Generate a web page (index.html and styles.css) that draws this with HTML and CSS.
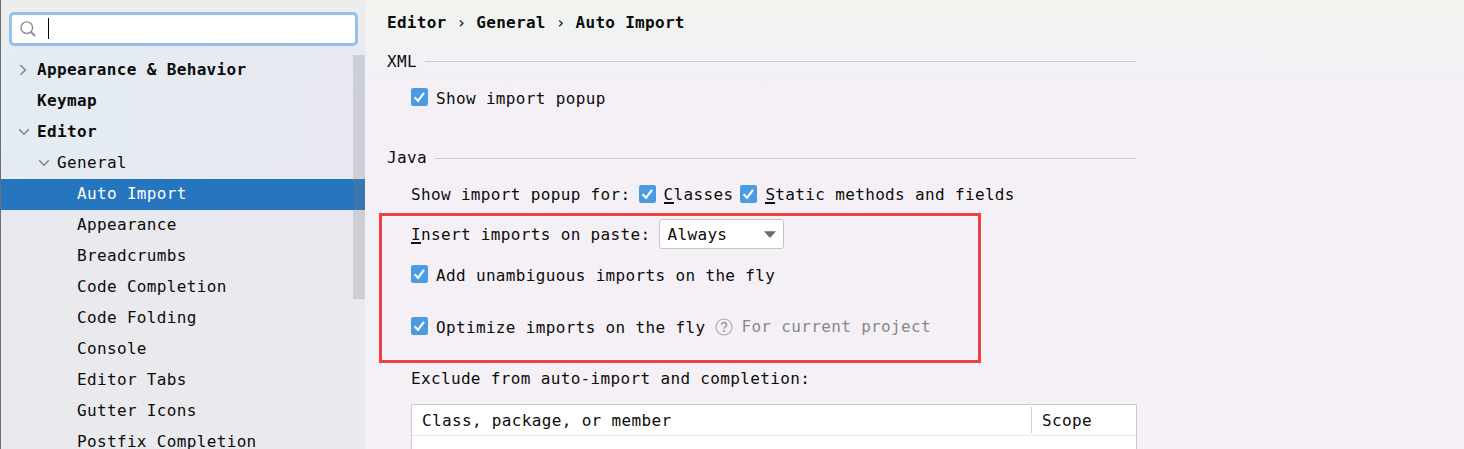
FILE: index.html
```
<!DOCTYPE html>
<html lang="en">
<head>
<meta charset="utf-8">
<title>Settings</title>
<link rel="stylesheet" href="styles.css">
</head>
<body>
<svg class="defs" width="0" height="0">
  <symbol id="check" viewBox="0 0 17 18"><rect width="17" height="18" rx="2.2" fill="#4b9be3"/><path d="M3.6 9.2 7 12.9 13 4.8" fill="none" stroke="#fff" stroke-width="2.2"/></symbol>
  <symbol id="down" viewBox="0 0 12 8"><path d="M1.2 1.2 6 6.2 10.8 1.2" fill="none" stroke="#7c828a" stroke-width="1.4"/></symbol>
  <symbol id="right" viewBox="0 0 8 12"><path d="M1.5 1.2 6.4 6 1.5 10.8" fill="none" stroke="#7c828a" stroke-width="1.4"/></symbol>
</svg>
<div class="window">
  <aside class="sidebar">
    <div class="search">
      <svg class="lens" viewBox="0 0 16 16"><circle cx="6.8" cy="6.7" r="5.8" fill="none" stroke="#8b8b9b" stroke-width="1.4"/><path d="M10.8 10.8 15 15" stroke="#8b8b9b" stroke-width="1.9"/></svg>
      <span class="caret"></span>
    </div>
    <div class="tree">
      <div class="row bold"><span class="arrow"><svg class="right"><use href="#right"/></svg></span>Appearance &amp; Behavior</div>
      <div class="row bold"><span class="arrow"></span>Keymap</div>
      <div class="row bold"><span class="arrow"><svg class="down"><use href="#down"/></svg></span>Editor</div>
      <div class="row level2"><span class="arrow"><svg class="down"><use href="#down"/></svg></span>General</div>
      <div class="row level3 selected">Auto Import</div>
      <div class="row level3">Appearance</div>
      <div class="row level3">Breadcrumbs</div>
      <div class="row level3">Code Completion</div>
      <div class="row level3">Code Folding</div>
      <div class="row level3">Console</div>
      <div class="row level3">Editor Tabs</div>
      <div class="row level3">Gutter Icons</div>
      <div class="row level3">Postfix Completion</div>
      <div class="thumb"></div>
    </div>
  </aside>
  <main class="panel">
    <h1 class="title">Editor <span class="sep">›</span> General <span class="sep">›</span> Auto Import</h1>
    <div class="section xml">XML<span class="rule"></span></div>
    <div class="line popup"><svg class="check"><use href="#check"/></svg>Show import popup</div>
    <div class="section java">Java<span class="rule"></span></div>
    <div class="line kinds"><span class="kinds-label">Show import popup for:</span><svg class="check"><use href="#check"/></svg><span class="classes"><u>C</u>lasses</span><svg class="check"><use href="#check"/></svg><span><u>S</u>tatic methods and fields</span></div>
    <div class="line paste"><span><u>I</u>nsert imports on paste:</span>
      <div class="combo">Always<svg class="tri" viewBox="0 0 12 7"><path d="M0 .3h12L6 7z" fill="#6e6a6e"/></svg></div></div>
    <div class="line add"><svg class="check"><use href="#check"/></svg>Add unambiguous imports on the fly</div>
    <div class="line optimize"><svg class="check"><use href="#check"/></svg>Optimize imports on the fly
      <svg class="help" viewBox="0 0 18 18"><circle cx="9" cy="9" r="8" fill="none" stroke="#aaa8ac" stroke-width="1.1"/><path d="M6.5 7.1C6.5 3.7 11.6 3.9 11.6 6.9 11.6 8.7 9.1 8.8 9.1 10.8" fill="none" stroke="#98969a" stroke-width="1.5"/><rect x="8.2" y="12.1" width="1.8" height="1.8" fill="#98969a"/></svg>
      <span class="hint">For current project</span></div>
    <div class="line exclude">Exclude from auto-import and completion:</div>
    <div class="table">
      <div class="thead"><span class="member">Class, package, or member</span><span class="scope">Scope</span></div>
    </div>
  </main>
  <div class="highlight"></div>
</div>
</body>
</html>
```
FILE: styles.css
```
* { box-sizing: border-box; }
body {
  margin: 0;
  font-family: "DejaVu Sans Mono", monospace;
  font-size: 16px;
  line-height: 20px;
  letter-spacing: 0.345px;
  color: #0c0c0c;
  white-space: nowrap;
}
.defs { display: block; height: 0; }
.window {
  position: relative;
  display: flex;
  width: 1464px;
  height: 449px;
  overflow: hidden;
  background: linear-gradient(#f0f3ee 0, #f1f3f3 30px, #f3f0f5 75px, #f5f0f6 120px);
}
.sidebar {
  width: 365px;
  padding-top: 12px;
  border-left: 1px solid #6f6d73;
  background:
    linear-gradient(#ededec 0, #ebecee 40px, transparent 50px),
    linear-gradient(transparent 150px, #e9e9ee 230px),
    linear-gradient(100deg, #e3edf3 0, #e7e9f1 60%, #e8e8f2);
}
.search {
  display: flex;
  align-items: center;
  width: 349px;
  height: 34px;
  margin-left: 8px;
  padding-left: 8px;
  border: 3px solid #94c0ec;
  border-radius: 5px;
  background: #fff;
}
.lens { width: 16px; height: 16px; }
.caret { width: 1px; height: 21px; margin: 0 0 1px 12px; background: #000; }
.tree { position: relative; margin-top: 9px; }
.row {
  display: flex;
  align-items: center;
  height: 31px;
  padding: 0 0 2px 16px;
}
.bold { font-weight: bold; }
.arrow { display: flex; align-items: center; width: 20px; }
.arrow svg { display: block; }
.down { width: 12px; height: 8px; margin-left: 1px; }
.right { width: 8px; height: 12px; margin-left: 2px; }
.level2 { padding-left: 36px; }
.level3 { padding-left: 76px; }
.selected { background: #2675bf; color: #fff; }
.thumb {
  position: absolute;
  top: 0;
  right: 0;
  width: 12px;
  height: 244px;
  border-bottom: 1px solid #c5c8ce;
  background: rgba(120, 125, 130, 0.24);
}
.panel { width: 771px; padding: 13px 0 0 22px; }
.title { margin: 0; font: inherit; font-weight: bold; letter-spacing: 0.29px; }
.sep { font-weight: normal; }
.section { display: flex; align-items: center; gap: 8px; width: 749px; }
.rule { flex: 1; height: 1px; background: #ceccd0; }
.xml { margin-top: 19px; }
.xml .rule { margin-bottom: 2px; }
.java { margin-top: 39px; }
.line { display: flex; align-items: center; height: 20px; margin-left: 24px; }
.check { flex: none; width: 17px; height: 18px; margin: 0 8px 4px 0; }
.popup { margin-top: 17px; }
.kinds { margin-top: 17px; }
.kinds .check { margin-bottom: 2px; }
.kinds-label { margin-right: 8px; }
.classes { margin-right: 7px; }
u { display: inline-block; height: 19px; vertical-align: top; text-decoration: none; box-shadow: inset 0 -2px #111; }
.paste { height: 30px; margin-top: 15px; }
.combo {
  display: flex;
  align-items: center;
  justify-content: space-between;
  width: 125px;
  height: 30px;
  margin: 0 0 2px 9px;
  padding: 2px 7px 0;
  border: 1px solid #c8c5ca;
  border-radius: 3px;
  background: #fff;
}
.tri { width: 12px; height: 7px; margin-bottom: 2px; }
.add { margin-top: 16px; }
.optimize { margin-top: 32px; }
.help { width: 18px; height: 18px; margin: 0 8px 2px 10px; }
.hint { color: #89878b; margin-bottom: 2px; }
.exclude { margin-top: 31px; }
.table {
  width: 726px;
  height: 80px;
  margin: 15px 0 0 24px;
  border: 1px solid #cdcacf;
  background: #fff;
}
.thead { display: flex; align-items: center; height: 31px; border-bottom: 1px solid #e9e5ea; }
.member { flex: 1; padding: 2px 0 0 10px; }
.scope { width: 105px; height: 26px; line-height: 28px; padding-left: 10px; border-left: 1px solid #d2cfd4; }
.highlight {
  position: absolute;
  left: 379px;
  top: 213px;
  width: 602px;
  height: 150px;
  border: 3px solid #ed4245;
}
```
